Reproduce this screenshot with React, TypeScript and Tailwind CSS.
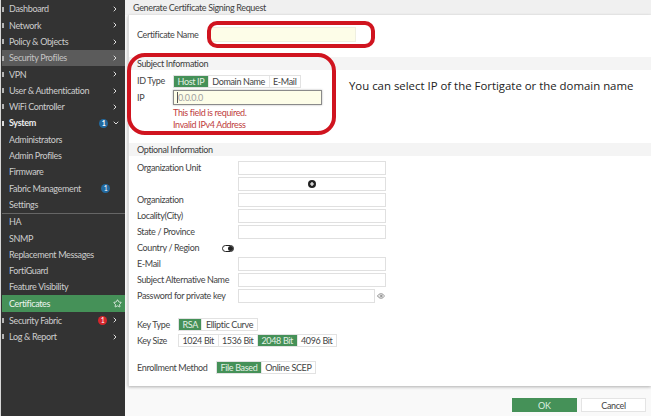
import React from 'react';
import { ChevronRight, ChevronDown, Star, Eye } from 'lucide-react';

const topItems = ['Dashboard', 'Network', 'Policy & Objects', 'Security Profiles', 'VPN', 'User & Authentication', 'WiFi Controller'];
const subItems = ['Administrators', 'Admin Profiles', 'Firmware', 'Fabric Management', 'Settings'];
const subItems2 = ['HA', 'SNMP', 'Replacement Messages', 'FortiGuard', 'Feature Visibility'];

const NavRow = ({ label, active, chevron, icon, children }: { label: string; active?: boolean; chevron?: boolean; icon?: boolean; children?: React.ReactNode }) => (
  <div className={`h-[16.3px] flex items-center pr-[6px] text-[9px] tracking-[-0.35px] ${active ? 'bg-[#5b5b5b] text-[#c4c4c4]' : 'text-[#cdcdcd]'}`}>
    <span className={`w-[2px] h-[5px] mr-[5px] shrink-0 ${icon ? 'bg-[#b5b5b5]' : ''}`} />
    <span className="flex-1 truncate">{label}</span>
    {children}
    {chevron && <ChevronRight size={8} strokeWidth={3} className="text-[#ddd]" />}
  </div>
);

const Badge = ({ color, n }: { color: string; n: number }) => (
  <span className={`w-[9px] h-[9px] rounded-full text-white text-[7px] leading-[9px] text-center mr-[4px] ${color}`}>{n}</span>
);

const Seg = ({ items, active }: { items: string[]; active: string }) => (
  <div className="flex border border-[#e2e2e2] h-[13px]">
    {items.map((t) => (
      <span key={t} className={`px-[3.5px] flex items-center text-[9px] tracking-[-0.35px] leading-none border-r border-[#e6e6e6] last:border-r-0 ${t === active ? 'bg-[#459158] text-[#e4f0e6]' : 'text-[#444]'}`}>{t}</span>
    ))}
  </div>
);

const Input = ({ w = 'w-[148px]' }: { w?: string }) => <div className={`h-[14px] border border-[#e0e0e0] bg-white ${w}`} />;

const Row = ({ label, children }: { label: string; children?: React.ReactNode }) => (
  <div className="h-[16px] flex items-center">
    <span className="w-[101px] shrink-0 text-[9px] tracking-[-0.35px] text-[#444] whitespace-nowrap">{label}</span>
    {children}
  </div>
);

const SectionBar = ({ title }: { title: string }) => (
  <div className="h-[13px] bg-[#f4f4f4] pl-[8px] flex items-center text-[9px] tracking-[-0.35px] text-[#3c3c3c]">{title}</div>
);

export default function App() {
  return (
    <div className="w-[651px] h-[416px] flex overflow-hidden bg-white relative font-['Lato',sans-serif]">
      <aside className="w-[125px] shrink-0 bg-[#333333] flex flex-col pl-px border-l border-[#d8d8d8] pt-px">
        {topItems.map((t) => (
          <NavRow key={t} label={t} chevron icon active={t === 'Security Profiles'} />
        ))}
        <div className="h-[16.3px] flex items-center pr-[5px] text-[9px] tracking-[-0.35px] font-bold text-[#eee]">
          <span className="w-[2px] h-[5px] mr-[5px] bg-[#dddddd]" />
          <span className="flex-1">System</span>
          <Badge color="bg-[#22699f]" n={1} />
          <ChevronDown size={8} strokeWidth={3} className="text-[#ddd]" />
        </div>
        {subItems.map((t) => (
          <NavRow key={t} label={t}>
            {t === 'Fabric Management' && <Badge color="bg-[#22699f] mr-[9px]" n={1} />}
          </NavRow>
        ))}
        <div className="h-px bg-[#666]" />
        {subItems2.map((t) => (
          <NavRow key={t} label={t} />
        ))}
        <div className="h-[17px] bg-[#459158] flex items-center pl-[7px] pr-[3px] text-[9px] tracking-[-0.35px] text-[#eef5ef]">
          <span className="flex-1">Certificates</span>
          <Star size={9} className="text-white" />
        </div>
        <NavRow label="Security Fabric" chevron icon>
          <Badge color="bg-[#d6262c]" n={1} />
        </NavRow>
        <NavRow label="Log & Report" chevron icon />
      </aside>

      <main className="flex-1 flex flex-col bg-[#f9f9f9] min-w-0">
        <div className="h-[15px] bg-[#f0f0f0] pl-[8px] flex items-center text-[9px] tracking-[-0.35px] text-[#3f3f3f]">Generate Certificate Signing Request</div>
        <div className="h-[371px] ml-[3px] bg-white shadow-[0_1px_3px_rgba(0,0,0,0.3)] border-l border-[#dcdcdc] flex flex-col">
          <div className="h-[42px] pl-[8px] pt-[12px] flex items-start">
            <span className="w-[73px] text-[9px] tracking-[-0.35px] text-[#444] leading-[15px]">Certificate Name</span>
            <div className="w-[146px] h-[15px] bg-[#fdfde8] border border-[#efefe0]" />
          </div>
          <SectionBar title="Subject Information" />
          <div className="h-[73px] pl-[8px] pt-[4px] flex flex-col">
            <div className="flex items-center h-[14px]">
              <span className="w-[36px] text-[9px] tracking-[-0.35px] text-[#444]">ID Type</span>
              <Seg items={['Host IP', 'Domain Name', 'E-Mail']} active="Host IP" />
            </div>
            <div className="flex items-center h-[15px] mt-[2px]">
              <span className="w-[36px] text-[9px] tracking-[-0.35px] text-[#444]">IP</span>
              <div className="w-[149px] h-[15px] border border-[#8a8a8a] bg-[#fdfde8] pl-[3px] text-[9px] tracking-[-0.35px] leading-[13px] text-[#a0a0a0] shadow-[0_0_2px_rgba(0,0,0,0.3)]">
                <span className="border-l border-[#555]">0.0.0.0</span>
              </div>
            </div>
            <div className="ml-[36px] mt-[2px] text-[9px] tracking-[-0.35px] leading-[12px] text-[#c0403c]">
              <div>This field is required.</div>
              <div>Invalid IPv4 Address</div>
            </div>
          </div>
          <SectionBar title="Optional Information" />
          <div className="pl-[8px] pt-[4px] flex flex-col">
            <Row label="Organization Unit"><Input /></Row>
            <Row label="">
              <div className="h-[14px] w-[148px] border border-[#e0e0e0] flex items-center justify-center">
                <svg width="8" height="8" viewBox="0 0 8 8">
                  <circle cx="4" cy="4" r="4" fill="#222" />
                  <path d="M4 2v4M2 4h4" stroke="#fff" strokeWidth="1.2" />
                </svg>
              </div>
            </Row>
            <Row label="Organization"><Input /></Row>
            <Row label="Locality(City)"><Input /></Row>
            <Row label="State / Province"><Input /></Row>
            <div className="h-[16px] flex items-center">
              <span className="w-[85px] text-[9px] tracking-[-0.35px] text-[#444]">Country / Region</span>
              <span className="w-[12px] h-[7px] rounded-full bg-white border border-[#222] flex justify-end">
                <span className="w-[5px] h-[5px] rounded-full bg-[#222]" />
              </span>
            </div>
            <Row label="E-Mail"><Input /></Row>
            <Row label="Subject Alternative Name"><Input /></Row>
            <Row label="Password for private key">
              <Input w="w-[137px]" />
              <Eye size={8} className="ml-[2px] text-[#666]" />
            </Row>
            <div className="h-[13px] mt-[14px] flex items-center">
              <span className="w-[41px] text-[9px] tracking-[-0.35px] text-[#444]">Key Type</span>
              <Seg items={['RSA', 'Elliptic Curve']} active="RSA" />
            </div>
            <div className="h-[13px] mt-[3px] flex items-center">
              <span className="w-[41px] text-[9px] tracking-[-0.35px] text-[#444]">Key Size</span>
              <Seg items={['1024 Bit', '1536 Bit', '2048 Bit', '4096 Bit']} active="2048 Bit" />
            </div>
            <div className="h-[13px] mt-[14px] flex items-center">
              <span className="w-[79px] text-[9px] tracking-[-0.35px] text-[#444]">Enrollment Method</span>
              <Seg items={['File Based', 'Online SCEP']} active="File Based" />
            </div>
          </div>
        </div>
        <div className="flex-1 flex justify-end items-end pb-[4px] pr-[5px] gap-[4px]">
          <button className="w-[65px] h-[14px] bg-[#459158] text-[#dcefe0] text-[9px] leading-none">OK</button>
          <button className="w-[65px] h-[14px] bg-white border border-[#e4e4e4] text-[#444] text-[9px] tracking-[-0.35px] leading-none">Cancel</button>
        </div>
      </main>

      <div className="absolute left-[349px] top-[79px] text-[11.4px] leading-[14px] text-[#222] font-['Open_Sans',sans-serif] whitespace-nowrap">You can select IP of the Fortigate or the domain name</div>
      <div className="absolute left-[207px] top-[21px] w-[168px] h-[27px] rounded-[10px] border-[4px] border-[#d0141f]" />
      <div className="absolute left-[127px] top-[53px] w-[209px] h-[82px] rounded-[18px] border-[4px] border-[#d0141f]" />
    </div>
  );
}
